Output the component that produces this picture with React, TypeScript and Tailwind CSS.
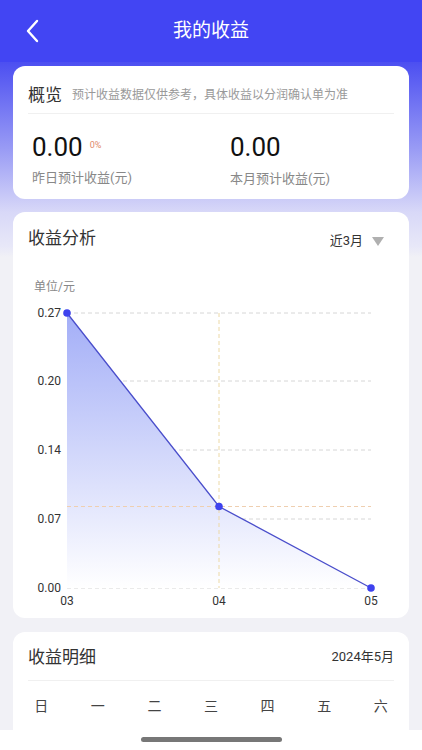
const font = { fontFamily: '"Roboto", "Noto Sans CJK SC", sans-serif' };

const yTicks = [
  { label: "0.27", y: 12 },
  { label: "0.20", y: 80 },
  { label: "0.14", y: 149 },
  { label: "0.07", y: 218 },
  { label: "0.00", y: 287 },
];

const points = [
  { label: "03", x: 54, y: 12 },
  { label: "04", x: 206, y: 205.5 },
  { label: "05", x: 358, y: 287 },
];

const weekdays = ["日", "一", "二", "三", "四", "五", "六"];

function Chart() {
  const line = points.map((p) => `${p.x},${p.y}`).join(" ");
  const area = `54,287 ${line} 358,287`;
  return (
    <svg width="395" height="312" viewBox="0 0 395 312" className="block">
      <defs>
        <linearGradient id="fill" x1="0" y1="0" x2="0" y2="1">
          <stop offset="0%" stopColor="#a3aef7" />
          <stop offset="100%" stopColor="#ffffff" />
        </linearGradient>
      </defs>
      {yTicks.map((t) => (
        <g key={t.label}>
          <line x1="54" x2="358" y1={t.y} y2={t.y} stroke="#d6d6d6" strokeWidth="1" strokeDasharray="4 3" />
          <text x="48" y={t.y + 4} textAnchor="end" fontSize="12" fill="#333" style={font}>
            {t.label}
          </text>
        </g>
      ))}
      <polygon points={area} fill="url(#fill)" />
      <line x1="206" x2="206" y1="12" y2="287" stroke="#ecd9a6" strokeWidth="1" strokeDasharray="4 3" />
      <line x1="54" x2="358" y1="205.5" y2="205.5" stroke="#efcfb0" strokeWidth="1" strokeDasharray="4 3" />
      <polyline points={line} fill="none" stroke="#4a4ecb" strokeWidth="1.3" />
      {points.map((p) => (
        <g key={p.label}>
          <circle cx={p.x} cy={p.y} r="3.8" fill="#3e42ee" />
          <text x={p.x} y="304" textAnchor="middle" fontSize="12" fill="#333" style={font}>
            {p.label}
          </text>
        </g>
      ))}
    </svg>
  );
}

export default function App() {
  return (
    <div className="relative h-[750px] w-full overflow-hidden bg-[#f1f1f6]" style={font}>
      <header className="relative flex h-[62px] items-center justify-center bg-[#4245f3]">
        <svg className="absolute left-[24px] top-[19px]" width="18" height="24" viewBox="0 0 18 24">
          <polyline points="13,2 4,12 13,22" fill="none" stroke="#fff" strokeWidth="2.4" strokeLinecap="round" strokeLinejoin="round" />
        </svg>
        <h1 className="text-[19px] text-white">我的收益</h1>
      </header>

      <main className="bg-[linear-gradient(180deg,#4c4ff1_0px,#9c9ef5_90px,#d8d8f8_150px,#e8e8f8_185px,#f1f1f6_195px)] px-[13px] pt-[4px]">
        <section className="rounded-[12px] bg-white px-[15px] pb-[11px] pt-[16px]">
          <div className="flex items-center">
            <h2 className="text-[17px] leading-[26px] text-[#333]">概览</h2>
            <p className="ml-[10px] text-[12px] text-[#999]">预计收益数据仅供参考，具体收益以分润确认单为准</p>
          </div>
          <div className="mt-[5px] h-px bg-[#f0f0f0]" />
          <div className="mt-[18px] flex pl-[4px]">
            <div className="w-[198px]">
              <div className="flex items-start">
                <span className="text-[26px] leading-[30px] text-[#111]">0.00</span>
                <span className="ml-[7px] mt-[7px] text-[9px] text-[#e08a6a]">0%</span>
              </div>
              <p className="mt-[7px] text-[13px] leading-[18px] text-[#888]">昨日预计收益(元)</p>
            </div>
            <div>
              <span className="text-[26px] leading-[30px] text-[#111]">0.00</span>
              <p className="mt-[7px] text-[13px] leading-[18px] text-[#888]">本月预计收益(元)</p>
            </div>
          </div>
        </section>

        <section className="mt-[13px] h-[406px] rounded-[12px] bg-white pt-[14px]">
          <div className="flex items-start justify-between pl-[15px] pr-[25px]">
            <h2 className="text-[17px] leading-[24px] text-[#333]">收益分析</h2>
            <div className="mt-[6px] flex items-center">
              <span className="text-[13px] leading-[18px] text-[#333]">近3月</span>
              <span className="ml-[9px] h-0 w-0 border-x-[6px] border-t-[9px] border-x-transparent border-t-[#b0b0b0]" />
            </div>
          </div>
          <p className="ml-[21px] mt-[29px] text-[12px] leading-[16px] text-[#888]">单位/元</p>
          <div className="mt-[6px]">
            <Chart />
          </div>
        </section>

        <section className="mt-[14px] h-[200px] rounded-[12px] bg-white pt-[13px]">
          <div className="flex items-center justify-between px-[15px]">
            <h2 className="text-[17px] leading-[24px] text-[#333]">收益明细</h2>
            <span className="text-[13px] text-[#333]">2024年5月</span>
          </div>
          <div className="mx-[15px] mt-[11px] h-px bg-[#f0f0f0]" />
          <div className="mt-[15px] grid grid-cols-7">
            {weekdays.map((d) => (
              <span key={d} className="text-center text-[14px] leading-[20px] text-[#444]">
                {d}
              </span>
            ))}
          </div>
        </section>
      </main>

      <div className="absolute bottom-0 left-0 flex h-[20px] w-full justify-center bg-white pt-[7px]">
        <div className="h-[5px] w-[141px] rounded-full bg-[#777]" />
      </div>
    </div>
  );
}
